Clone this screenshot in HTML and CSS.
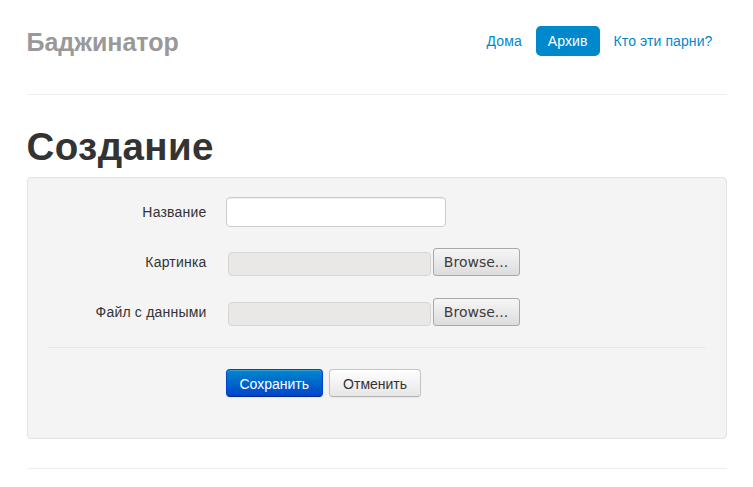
FILE: index.html
```html
<!DOCTYPE html>
<html lang="ru">
<head>
<meta charset="utf-8">
<title>Баджинатор</title>
<link rel="stylesheet" href="styles.css">
</head>
<body>
<div class="container">
  <header class="masthead">
    <a class="brand" href="#">Баджинатор</a>
    <nav class="nav">
      <a class="nav-link" href="#">Дома</a>
      <a class="nav-link active" href="#">Архив</a>
      <a class="nav-link" href="#">Кто эти парни?</a>
    </nav>
  </header>
  <hr class="rule">
  <h1 class="title">Создание</h1>
  <div class="well">
    <form class="form">
      <div class="group">
        <label class="label">Название</label>
        <div class="controls"><span class="text-input"></span></div>
      </div>
      <div class="group">
        <label class="label">Картинка</label>
        <div class="controls file">
          <span class="file-field"></span>
          <span class="browse">Browse...</span>
        </div>
      </div>
      <div class="group">
        <label class="label">Файл с данными</label>
        <div class="controls file">
          <span class="file-field"></span>
          <span class="browse">Browse...</span>
        </div>
      </div>
      <div class="actions">
        <button type="button" class="btn primary">Сохранить</button>
        <button type="button" class="btn">Отменить</button>
      </div>
    </form>
  </div>
  <hr class="rule bottom">
</div>
</body>
</html>
```
FILE: styles.css
```css
* { box-sizing: border-box; }
html, body { margin: 0; padding: 0; background: #fff; }
body {
  font-family: "Liberation Sans", Arial, sans-serif;
  font-size: 14px;
  line-height: 20px;
  color: #333;
}
.container {
  width: 700px;
  margin: 0 auto;
}
.masthead {
  display: flex;
  align-items: center;
  justify-content: space-between;
  padding-top: 26px;
  height: 56px;
}
.brand {
  font-size: 25px;
  font-weight: bold;
  color: #999;
  text-decoration: none;
  line-height: 30px;
  padding-top: 2px;
}
.nav {
  display: flex;
  gap: 2px;
  margin-right: 2px;
}
.nav-link {
  color: #0088cc;
  text-decoration: none;
  padding: 5px 12px;
  line-height: 20px;
  border-radius: 5px;
  letter-spacing: 0.1px;
}
.nav-link.active {
  color: #fff;
  background: #0088cc;
}
.rule {
  border: 0;
  border-top: 1px solid #eee;
  margin: 38px 0 0;
  height: 0;
}
.title {
  font-size: 38.5px;
  line-height: 40px;
  font-weight: bold;
  letter-spacing: 0.4px;
  margin: 32px 0 10px;
  color: #333;
}
.well {
  background: #f4f4f4;
  border: 1px solid #e3e3e3;
  border-radius: 4px;
  padding: 19px 19px 20px;
  height: 262px;
}
.group {
  display: flex;
  align-items: center;
  margin-bottom: 20px;
  height: 30px;
}
.label {
  width: 160px;
  text-align: right;
  margin-right: 20px;
  color: #333;
  letter-spacing: 0.2px;
}
.controls { display: flex; align-items: center; margin-left: -1px; }
.text-input {
  display: block;
  width: 220px;
  height: 30px;
  background: #fff;
  border: 1px solid #ccc;
  border-radius: 4px;
  box-shadow: inset 0 1px 1px rgba(0,0,0,0.075);
}
.file-field {
  display: block;
  width: 203px;
  height: 24px;
  margin-left: 2px;
  margin-top: 4px;
  background: #e9e8e6;
  border: 1px solid #d6d6d6;
  border-radius: 4px;
}
.browse {
  display: block;
  margin-left: 2px;
  height: 28px;
  width: 87px;
  border: 1px solid #a9a9a9;
  border-radius: 3px;
  background: linear-gradient(#f6f6f6, #dcdcdc);
  font-family: "DejaVu Sans", sans-serif;
  font-size: 14px;
  line-height: 26px;
  text-align: center;
  color: #3c3c3c;
}
.actions {
  margin: 0 1px;
  border-top: 1px solid #e7e7e7;
  padding: 21px 0 0 178px;
  display: flex;
  gap: 6px;
}
.btn {
  font-family: "Liberation Sans", Arial, sans-serif;
  font-size: 14px;
  line-height: 20px;
  padding: 4px 13px;
  border: 1px solid #c5c5c5;
  border-bottom-color: #b3b3b3;
  border-radius: 4px;
  background: linear-gradient(#ffffff, #e6e6e6);
  color: #333;
  box-shadow: inset 0 1px 0 rgba(255,255,255,0.2), 0 1px 2px rgba(0,0,0,0.05);
  cursor: pointer;
  height: 28px;
}
.btn.primary {
  color: #fff;
  background: linear-gradient(#0088cc, #0044cc);
  border-color: #0044cc #0044cc #002a80;
}
.rule.bottom {
  margin-top: 29px;
}
```
